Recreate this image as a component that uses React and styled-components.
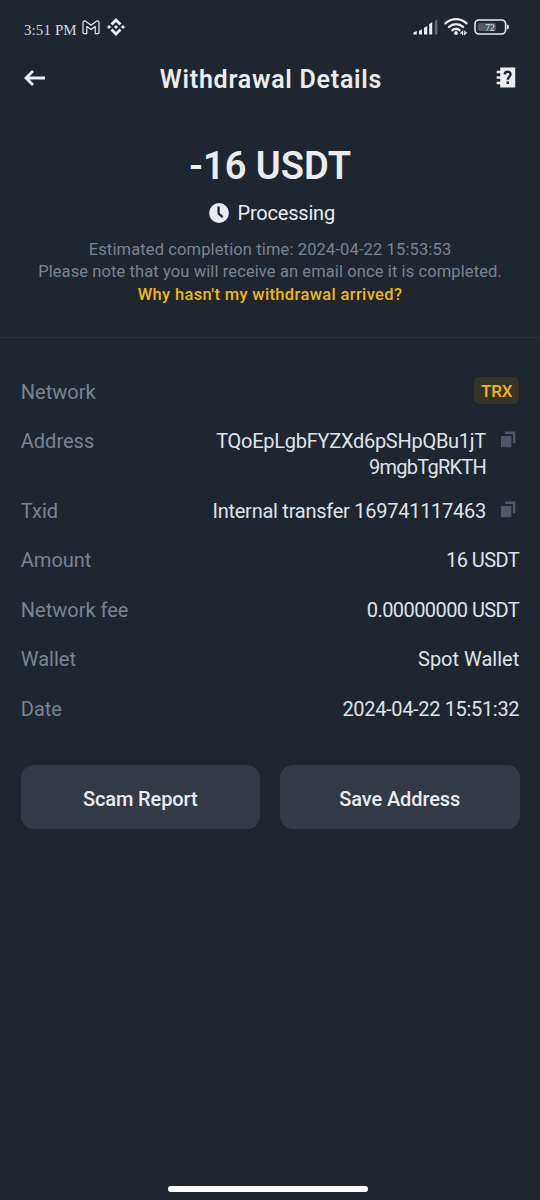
import React from 'react';
import styled, {createGlobalStyle} from "styled-components";

const colors = {
    bg: '#202630',
    font: '#eaecef',
    value: '#dfe3e9',
    muted: '#7b8391',
    accent: '#f0b90b',
    tag: '#35332c',
    button: '#343a45',
    line: '#2b323c',
    copy: '#4f5766',
};

const details = [
    {label: 'Network', tag: 'TRX'},
    {
        label: 'Address',
        lines: [
            {text: 'TQoEpLgbFYZXd6pSHpQBu1jT', spacing: -0.27},
            {text: '9mgbTgRKTH', spacing: -0.75},
        ],
        copy: true,
    },
    {label: 'Txid', lines: [{text: 'Internal transfer 169741117463', spacing: -0.26}], copy: true},
    {label: 'Amount', lines: [{text: '16 USDT', spacing: -0.55}]},
    {label: 'Network fee', lines: [{text: '0.00000000 USDT', spacing: -0.58}]},
    {label: 'Wallet', lines: [{text: 'Spot Wallet', spacing: 0}]},
    {label: 'Date', lines: [{text: '2024-04-22 15:51:32', spacing: -0.33}]},
];

const MailIcon = () => (
    <svg width="18" height="15" viewBox="0 0 18 15" fill="none" stroke={colors.font} strokeWidth="1.2" strokeLinejoin="round">
        <path d="M1 2.6C1 1 2.9 .5 4 1.4L9 5.2L14 1.4C15.1 .5 17 1 17 2.6V12.4Q17 13.6 15.8 13.6H13.2V6.4L9 9.6L4.8 6.4V13.6H2.2Q1 13.6 1 12.4Z"/>
    </svg>
);

const BinanceIcon = () => (
    <svg width="18" height="18" viewBox="0 0 24 24" fill={colors.font}>
        <path d="M16.624 13.92l2.718 2.716-7.353 7.353-7.353-7.352 2.717-2.717 4.636 4.66 4.635-4.66zm4.637-4.636L24 12l-2.715 2.716L18.568 12l2.693-2.716zm-9.272 0l2.716 2.692-2.717 2.717L9.272 12l2.716-2.715zm-9.273 0L5.41 12l-2.692 2.692L0 12l2.716-2.716zM11.99.01l7.352 7.33-2.717 2.715-4.636-4.636-4.635 4.66-2.717-2.716L11.989.011z"/>
    </svg>
);

const SignalIcon = () => (
    <svg width="25" height="16" viewBox="0 0 25 16" fill={colors.font}>
        <path d="M.4 15.4V13.6L3.8 12V15.4Z"/>
        <path d="M6 15.4V12L9 10.2V15.4Z"/>
        <path d="M11 15.4V8.8L14.2 7V15.4Z"/>
        <path d="M16.2 15.4V5L19.2 3V15.4Z"/>
        <path d="M21.8 15.4V2L24.4 .6V15.4Z" fill="#666c76"/>
    </svg>
);

const WifiIcon = () => (
    <svg width="24" height="18" viewBox="0 0 24 18" fill="none" stroke={colors.font} strokeWidth="2.3" strokeLinecap="round">
        <path d="M1.4 5.4C7.4 -.2 16.6 -.2 22.6 5.4"/>
        <path d="M4.9 9C9 5.2 15 5.2 19.1 9"/>
        <path d="M8.4 12.2C10.6 10.4 13.4 10.4 15.6 12.2"/>
        <circle cx="12" cy="15" r="1.9" fill={colors.font} stroke="none"/>
        <path d="M16.8 15.2L18.6 13.6V16.6M22.4 14.6L20.8 16.2V13.2" strokeWidth="1.3"/>
    </svg>
);

const BatteryIcon = () => (
    <svg width="36" height="17" viewBox="0 0 36 17">
        <rect x="1" y="1" width="30.6" height="14" rx="4" fill="none" stroke={colors.font} strokeWidth="1.6"/>
        <path d="M33 5.6Q35 5.6 35 8Q35 10.4 33 10.4Z" fill={colors.font}/>
        <rect x="3.8" y="4" width="18" height="8" rx="1.4" fill="#555b66"/>
        <text x="16" y="12.2" textAnchor="middle" fontSize="9.5" fontFamily="Liberation Serif, serif" fill={colors.font}>72</text>
    </svg>
);

const BackIcon = () => (
    <svg width="22" height="16" viewBox="0 0 22 16" fill="none" stroke={colors.font} strokeWidth="2.8">
        <path d="M21 8H2.4M9 1L2 8L9 15"/>
    </svg>
);

const GuideIcon = () => (
    <svg width="20" height="21" viewBox="0 0 20 21">
        <path d="M4.2 .4H19.2V20.6H4.2V17.2H.6V14.8H4.2V11.7H.6V9.3H4.2V6.2H.6V3.8H4.2Z" fill={colors.font}/>
        <path d="M8.8 7.4C8.8 3.8 14.6 4 14.6 7.2C14.6 9.6 11.8 9.6 11.8 12.8" fill="none" stroke={colors.bg} strokeWidth="2.4"/>
        <rect x="10.5" y="14.4" width="2.6" height="2.6" fill={colors.bg}/>
    </svg>
);

const ClockIcon = () => (
    <svg width="20" height="20" viewBox="0 0 20 20">
        <circle cx="10" cy="10" r="9.9" fill={colors.font}/>
        <path d="M9.6 3.6V10.6L13.6 14.2" fill="none" stroke={colors.bg} strokeWidth="2.3"/>
    </svg>
);

const CopyIcon = () => (
    <svg width="16" height="17" viewBox="0 0 16 17" fill={colors.copy}>
        <rect x="1" y="5" width="10.4" height="11.2"/>
        <path d="M5 .6H15.4V12.2H12.9V3.1H5Z"/>
    </svg>
);

const App = () => {
    return (
        <Screen>
            <GlobalStyle/>
            <StatusBar>
                <StatusLeft>
                    <Time>3:51 PM</Time>
                    <MailIcon/>
                    <BinanceIcon/>
                </StatusLeft>
                <StatusRight>
                    <SignalIcon/>
                    <WifiIcon/>
                    <BatteryIcon/>
                </StatusRight>
            </StatusBar>
            <Header>
                <IconButton aria-label="Back"><BackIcon/></IconButton>
                <Title>Withdrawal Details</Title>
                <IconButton aria-label="Help"><GuideIcon/></IconButton>
            </Header>
            <Summary>
                <Total>-16 USDT</Total>
                <Status><ClockIcon/>Processing</Status>
                <Notes>
                    <Note $spacing={0.13}>Estimated completion time: 2024-04-22 15:53:53</Note>
                    <Note $spacing={0.1}>Please note that you will receive an email once it is completed.</Note>
                </Notes>
                <HelpLink>Why hasn't my withdrawal arrived?</HelpLink>
            </Summary>
            <Details>
                {details.map(({label, tag, lines, copy}) => (
                    <Row key={label}>
                        <Label>{label}</Label>
                        {tag && <Tag>{tag}</Tag>}
                        {lines && (
                            <Value>
                                {lines.map(({text, spacing}) => (
                                    <ValueLine key={text} $spacing={spacing}>{text}</ValueLine>
                                ))}
                            </Value>
                        )}
                        {copy && <CopyButton aria-label="Copy"><CopyIcon/></CopyButton>}
                    </Row>
                ))}
            </Details>
            <Actions>
                <Button>Scam Report</Button>
                <Button>Save Address</Button>
            </Actions>
            <HomeBar/>
        </Screen>
    );
};

export default App;

const GlobalStyle = createGlobalStyle`
    * {
        box-sizing: border-box;
    }

    body {
        margin: 0;
        background-color: ${colors.bg};
        color: ${colors.font};
        font-family: Roboto, "Liberation Sans", sans-serif;
    }

    svg {
        display: block;
        flex-shrink: 0;
    }

    button {
        margin: 0;
        padding: 0;
        border: none;
        background: none;
        color: inherit;
        font-family: inherit;
    }
`

const Screen = styled.main`
    width: 540px;
    height: 1200px;
    display: flex;
    flex-direction: column;
    overflow: hidden;
`

const StatusBar = styled.div`
    height: 56px;
    padding: 18px 30px 0 24px;
    display: flex;
    justify-content: space-between;
    align-items: flex-start;
`

const StatusLeft = styled.div`
    display: flex;
    align-items: flex-start;

    svg {
        margin-top: 1.5px;
    }

    svg + svg {
        margin: 0 0 0 7px;
    }
`

const Time = styled.span`
    margin-right: 5px;
    padding-top: 3px;
    font-family: "Liberation Serif", serif;
    font-size: 15px;
    line-height: 18px;
    letter-spacing: 0.1px;
    color: #d5d8dd;
`

const StatusRight = styled.div`
    display: flex;
    align-items: center;
    gap: 6px;
`

const Header = styled.header`
    height: 46px;
    padding: 0 24px;
    display: flex;
    align-items: center;
    justify-content: space-between;
`

const IconButton = styled.button`
    margin-top: -3px;
`

const Title = styled.h1`
    margin: 0;
    padding-top: 2px;
    font-size: 25px;
    font-weight: 600;
    line-height: 30px;
    letter-spacing: 0.75px;
`

const Summary = styled.section`
    height: 236px;
    padding-top: 42px;
    display: flex;
    flex-direction: column;
    align-items: center;
    border-bottom: 1px solid ${colors.line};
`

const Total = styled.div`
    font-size: 38px;
    font-weight: 600;
    line-height: 44px;
`

const Status = styled.div`
    margin-top: 12px;
    padding-left: 4px;
    display: flex;
    align-items: center;
    gap: 8.5px;
    font-size: 20px;
    line-height: 26px;
    letter-spacing: -0.2px;
`

const Notes = styled.div`
    margin-top: 13px;
    text-align: center;
    color: ${colors.muted};
`

const Note = styled.p`
    margin: 0;
    font-size: 16.5px;
    line-height: 21.5px;
    letter-spacing: ${({$spacing}) => $spacing}px;
`

const HelpLink = styled.a`
    margin-top: 2px;
    font-size: 16.5px;
    font-weight: 500;
    line-height: 22px;
    letter-spacing: 0.35px;
    color: ${colors.accent};
`

const Details = styled.section`
    padding: 41.6px 20.8px 0;
    display: flex;
    flex-direction: column;
    gap: 18px;
`

const Row = styled.div`
    min-height: 31.5px;
    display: flex;
    align-items: flex-start;
    font-size: 20px;
    line-height: 25.8px;
`

const Label = styled.span`
    flex: 1;
    color: ${colors.muted};
`

const Tag = styled.span`
    height: 27px;
    margin: -2.6px 0 0;
    padding: 1px 7px 0;
    border-radius: 5px;
    background-color: ${colors.tag};
    color: ${colors.accent};
    font-size: 17px;
    font-weight: 500;
    line-height: 27px;
    letter-spacing: -0.2px;
`

const Value = styled.div`
    text-align: right;
    color: ${colors.value};
`

const ValueLine = styled.div`
    letter-spacing: ${({$spacing}) => $spacing}px;
`

const CopyButton = styled.button`
    margin: 2.4px 3.2px 0 14px;
`

const Actions = styled.div`
    padding: 37.2px 20.5px 0;
    display: grid;
    grid-template-columns: 1fr 1fr;
    gap: 20px;
`

const Button = styled.button`
    height: 63.5px;
    padding-top: 3px;
    border-radius: 13px;
    background-color: ${colors.button};
    font-size: 20px;
    font-weight: 500;
    letter-spacing: -0.1px;
`

const HomeBar = styled.div`
    width: 200px;
    height: 5.5px;
    margin: auto auto 8.4px 168px;
    border-radius: 3px;
    background-color: #fff;
`
